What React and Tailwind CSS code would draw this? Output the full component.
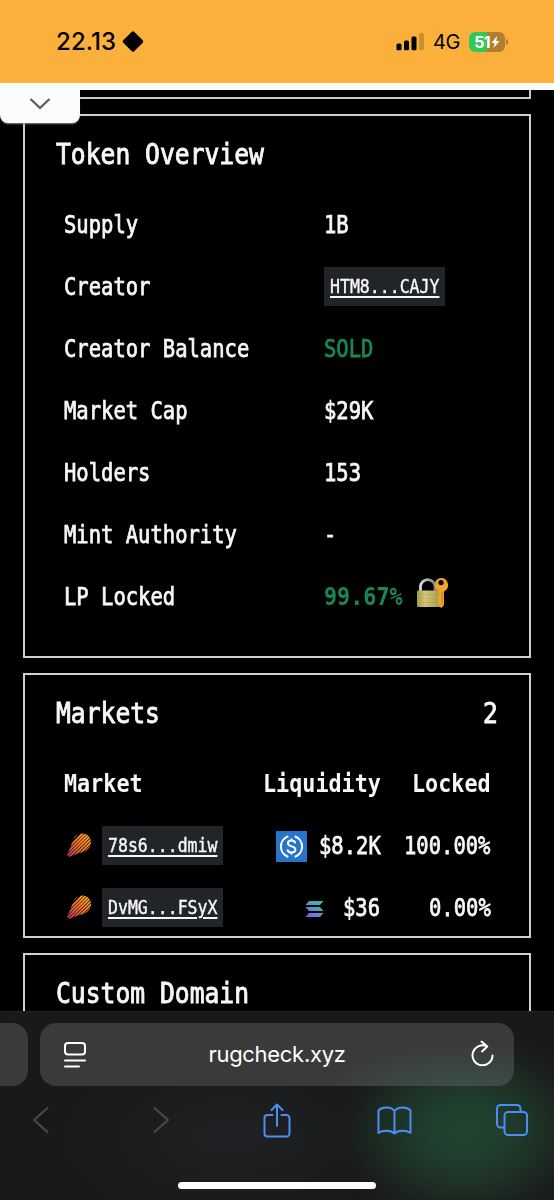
import React from "react";

const variants = {
  title: { cls: "text-[28.5px] leading-[32px] [-webkit-text-stroke:0.9px_currentColor]", advance: 17.16, pitch: 14.85 },
  body: { cls: "pt-[1px] text-[24px] leading-[28px] [-webkit-text-stroke:0.75px_currentColor]", advance: 14.45, pitch: 12.35 },
  strong: { cls: "pt-[1px] text-[24px] leading-[28px] font-bold", advance: 14.45, pitch: 13.1 },
  link: {
    cls: "text-[19.5px] leading-[24px] underline decoration-2 underline-offset-[3px] [-webkit-text-stroke:0.4px_currentColor]",
    advance: 11.74,
    pitch: 9.95,
  },
};

// Condensed monospace text: the wrapper reserves the condensed width.
function Mono({ children, v = "body", className = "" }) {
  const { cls, advance, pitch } = variants[v];
  return (
    <span className={`block shrink-0 whitespace-pre ${className}`} style={{ width: children.length * pitch }}>
      <span
        className={`block w-max origin-left font-['DejaVu_Sans_Mono',monospace] ${cls}`}
        style={{ transform: `scaleX(${pitch / advance})` }}
      >
        {children}
      </span>
    </span>
  );
}

function AddressLink({ children }) {
  return (
    <a className="flex h-[39px] w-[121px] items-center bg-[#212428] pl-[6px] pt-[2px]">
      <Mono v="link">{children}</Mono>
    </a>
  );
}

function LockIcon() {
  return (
    <svg className="ml-[13px] h-8 w-[33px] -translate-y-[3px]" viewBox="0 0 33 32">
      <defs>
        <linearGradient id="brass" x1="0" x2="1">
          <stop offset="0" stopColor="#a39a45" />
          <stop offset=".35" stopColor="#d3c978" />
          <stop offset="1" stopColor="#a99a49" />
        </linearGradient>
        <linearGradient id="steel" x1="0" x2="1">
          <stop offset="0" stopColor="#d5dae0" />
          <stop offset="1" stopColor="#79818c" />
        </linearGradient>
      </defs>
      <path d="M4.5 15V10a7.3 7.3 0 0 1 14.6 0v5" fill="none" stroke="url(#steel)" strokeWidth="2.8" />
      <rect x="1" y="13.5" width="23" height="16.5" rx="1" fill="url(#brass)" />
      <path d="M1.5 17.5h22M1.5 21.5h22M1.5 25.5h22" stroke="#8f873f" strokeWidth=".6" opacity=".4" />
      <path
        fillRule="evenodd"
        d="M25 1a7.1 7.1 0 0 1 3 13.5V28l-2.6 3-2.6-2v-2l-1.6-1 1.6-1.5v-2l-1.6-1 1.6-1.5v-5.5A7.1 7.1 0 0 1 25 1Zm0 2a2.6 2.6 0 1 0 0 5.2A2.6 2.6 0 0 0 25 3Z"
        fill="#eda52b"
      />
      <path d="M26.3 15v13" stroke="#b97812" strokeWidth=".8" />
    </svg>
  );
}

function MeteoraIcon({ id }) {
  return (
    <svg className="h-6 w-[26px]" viewBox="0 0 26 24">
      <defs>
        <linearGradient id={`${id}-g`} x1="1" y1="0" x2="0" y2="1">
          <stop offset="0" stopColor="#ffae10" />
          <stop offset=".55" stopColor="#f3702f" />
          <stop offset="1" stopColor="#b12d68" />
        </linearGradient>
        <mask id={`${id}-m`}>
          <path
            d="M-2 14L14-2M0 17L18-1M0 20.500L21-.5M0 24L24 0M1.500 26L26 1.500M5 26L28 3M8.500 26L28 6.500M12 26L30 8"
            stroke="#fff"
            strokeWidth="1.9"
          />
        </mask>
      </defs>
      <path
        d="M7.500 6C9.500 2 13 .5 16.500.5 21.500.5 25 4.200 25 9c0 4-2.500 7.500-6.500 9.500L12 20.500 3 24 1 22l3-7Z"
        fill={`url(#${id}-g)`}
        mask={`url(#${id}-m)`}
      />
    </svg>
  );
}

function UsdcIcon() {
  return (
    <svg className="mr-3 h-[31px] w-[31px] translate-y-[1px]" viewBox="0 0 31 31" fill="none" stroke="#fff">
      <rect width="31" height="31" fill="#2775ca" stroke="none" />
      <path d="M12.300 5.200a11 11 0 0 0 0 20.800M18.700 5.200a11 11 0 0 1 0 20.800" strokeWidth="2" />
      <path
        d="M19.200 12.300c-.2-1.800-1.600-2.700-3.700-2.700s-3.600 1-3.600 2.700c0 4.200 7.500 2 7.500 6.200 0 1.800-1.500 2.900-3.900 2.900s-3.900-1-4-3M15.500 7.500v2.200M15.500 21.300v2.300"
        strokeWidth="2"
      />
    </svg>
  );
}

function SolanaIcon() {
  return (
    <svg className="mr-[19px] h-[17px] w-[19px] translate-y-[1.5px]" viewBox="0 0 19 17">
      <defs>
        <linearGradient id="sol" x1="17" y1="0" x2="3" y2="17" gradientUnits="userSpaceOnUse">
          <stop offset="0" stopColor="#20c99a" />
          <stop offset=".5" stopColor="#5798c0" />
          <stop offset="1" stopColor="#8955ee" />
        </linearGradient>
      </defs>
      <path d="M4 .5h14.500l-3.500 4H.5ZM.5 6.500H15l3.500 4H4ZM4 12.500h14.500l-3.500 4H.5Z" fill="url(#sol)" />
    </svg>
  );
}

function Row({ label, children }) {
  return (
    <div className="flex h-[62px] items-center">
      <div className="w-[260px]">
        <Mono>{label}</Mono>
      </div>
      {children}
    </div>
  );
}

function MarketRow({ id, address, icon, liquidity, locked }) {
  return (
    <div className="flex h-[62px] items-center">
      <div className="flex w-[164px] items-center gap-[10px] pl-[2px]">
        <MeteoraIcon id={id} />
        <AddressLink>{address}</AddressLink>
      </div>
      <div className="flex w-[152.500px] items-center justify-end">
        {icon}
        <Mono>{liquidity}</Mono>
      </div>
      <div className="flex w-[110px] justify-end">
        <Mono>{locked}</Mono>
      </div>
    </div>
  );
}

function StatusBar() {
  return (
    <header className="flex h-[83px] shrink-0 items-center bg-[#fcb03c] pl-[56px] pr-[46px] font-['Inter',sans-serif] text-black">
      <span className="w-[65px] text-[24px] font-medium tracking-[0.1px]">22.13</span>
      <svg className="h-6 w-6 -translate-y-[0.5px]" viewBox="0 0 24 24">
        <rect x="4.300" y="4.300" width="15.400" height="15.400" rx="1.600" transform="rotate(45 12 12)" />
      </svg>
      <svg className="ml-auto h-[18px] w-[29px] -translate-y-[0.5px]" viewBox="0 0 29 18">
        <rect x="0.500" y="11" width="5" height="7" rx="1.500" />
        <rect x="8" y="8" width="5" height="10" rx="1.500" />
        <rect x="15.500" y="4" width="5" height="14" rx="1.500" />
        <rect x="23" y="0.500" width="5" height="17.500" rx="1.500" fill="#cb902f" />
      </svg>
      <span className="ml-[8px] w-[36px] text-[20px] tracking-[-0.4px]">4G</span>
      <div className="flex h-5 w-9 items-center justify-center overflow-hidden rounded-[6px] bg-[linear-gradient(90deg,#34c759_50%,#b17d30_50%)] text-[16px] font-bold tracking-[-0.8px] text-white">
        51
        <svg className="ml-[1px] h-3 w-[9px]" viewBox="0 0 9 12" fill="#fff">
          <path d="M6 0L.5 7h3L2.500 12 8.500 5h-3.200Z" />
        </svg>
      </div>
      <div className="ml-[1px] h-[6px] w-[2px] rounded-r-full bg-[#b17d30]" />
    </header>
  );
}

function BrowserBar() {
  return (
    <footer className="flex h-[189px] shrink-0 flex-col border-t border-[#252525] bg-[#191919] bg-[radial-gradient(ellipse_135px_100px_at_465px_118px,#21432f_0%,#203f2d_25%,#1d3126_55%,#1a1f1c_82%,transparent_100%),radial-gradient(ellipse_170px_90px_at_230px_125px,#202124,transparent)] pt-[11px]">
      <div className="flex h-[63px] gap-3">
        <div className="w-7 rounded-r-[16px] bg-[#3a3a3a]" />
        <div className="flex w-[474px] items-center justify-between rounded-[16px] bg-[#3a3a3a] bg-[radial-gradient(ellipse_150px_55px_at_425px_75px,#3c5448,transparent)] pl-6 pr-[19px] text-white">
          <svg className="h-[26px] w-[23px]" viewBox="0 0 23 26" fill="none" stroke="currentColor" strokeWidth="2" strokeLinecap="round">
            <rect x="1" y="1" width="20" height="11.500" rx="3" />
            <path d="M1 18.500h20M1 24.500h14" />
          </svg>
          <span className="-translate-x-[2px] font-['Inter',sans-serif] text-[22px] tracking-[-0.3px]">rugcheck.xyz</span>
          <svg className="h-[26px] w-6 -translate-y-[1.5px]" viewBox="0 0 24 26" fill="none" stroke="currentColor" strokeWidth="2" strokeLinecap="round" strokeLinejoin="round">
            <path d="M21.500 15A10 10 0 1 1 16 5.900M10.500 1l5.800 4.900-5.300 5" />
          </svg>
        </div>
      </div>
      <div className="mt-[16px] flex h-9 items-center justify-between pl-[23px] pr-[24px] text-[#4c8df5]">
        <div className="flex w-9 justify-center">
          <svg className="h-[26px] w-4 text-[#4a4a4b]" viewBox="0 0 16 26" fill="none" stroke="currentColor" strokeWidth="2" strokeLinecap="round">
            <path d="M14.500 1L1 13l13.500 12" />
          </svg>
        </div>
        <div className="flex w-9 justify-center pl-[5px]">
          <svg className="h-[26px] w-4 shrink-0 text-[#4a4a4b]" viewBox="0 0 16 26" fill="none" stroke="currentColor" strokeWidth="2" strokeLinecap="round">
            <path d="M1.500 1L15 13 1.500 25" />
          </svg>
        </div>
        <div className="flex w-9 justify-center">
          <svg className="h-[35px] w-[28px]" viewBox="0 0 28 35" fill="none" stroke="currentColor" strokeWidth="2" strokeLinecap="round" strokeLinejoin="round">
            <path d="M9.500 12H4.500A3 3 0 0 0 1.500 15v15.500a3 3 0 0 0 3 3h19a3 3 0 0 0 3-3V15a3 3 0 0 0-3-3h-5M14 23V2M8.500 7L14 1.500 19.500 7" />
          </svg>
        </div>
        <div className="flex w-9 justify-center">
          <svg className="h-[29px] w-[35px]" viewBox="0 0 35 29" fill="none" stroke="currentColor" strokeWidth="2" strokeLinejoin="round">
            <path d="M17.500 5C14 .5 5.500.5 1.500 4.500v22.500c4-3 12.500-3 16 .5 3.500-3.500 12-3.500 16-.5V4.500C29.500.5 21 .5 17.500 5v22.500" />
          </svg>
        </div>
        <div className="flex w-9 justify-center">
          <svg className="h-8 w-8" viewBox="0 0 32 32" fill="none" stroke="currentColor" strokeWidth="2">
            <rect x="8.500" y="8" width="22.500" height="23" rx="3.500" />
            <path d="M24.500 8V4.500A3.500 3.500 0 0 0 21 1H4.500A3.500 3.500 0 0 0 1 4.500V20a3.500 3.500 0 0 0 3.500 3.500h4" />
          </svg>
        </div>
      </div>
      <div className="mx-auto mt-auto mb-[11px] h-[7px] w-[198px] rounded-full bg-white" />
    </footer>
  );
}

export default function App() {
  return (
    <div className="flex h-[1200px] w-[554px] flex-col overflow-hidden bg-black text-[#f7f7f7]">
      <StatusBar />
      <div className="relative h-[7px] shrink-0 bg-[#fafcfc]">
        <div className="absolute left-0 top-0 flex h-[40px] w-20 items-center justify-center rounded-b-[8px] bg-[#fafcfc] pt-[2px] [box-shadow:0_2px_2px_-1px_#888]">
          <svg className="h-3 w-[22px]" viewBox="0 0 22 12" fill="none" stroke="#5c5d5f" strokeWidth="2.300">
            <path d="M1.500 1L11 10 20.500 1" />
          </svg>
        </div>
      </div>
      <main className="flex min-h-0 flex-1 flex-col overflow-hidden px-[23px]">
        <div className="h-[9px] w-[508px] shrink-0 border-2 border-t-0 border-[#cacaca]" />
        <section className="mt-[15px] h-[544px] w-[508px] shrink-0 border-2 border-[#d0d0d0] pl-[31px] pt-[23px]">
          <Mono v="title">Token Overview</Mono>
          <div className="pl-2 pt-[22px]">
            <Row label="Supply"><Mono>1B</Mono></Row>
            <Row label="Creator"><AddressLink>HTM8...CAJY</AddressLink></Row>
            <Row label="Creator Balance"><Mono className="text-[#198754]">SOLD</Mono></Row>
            <Row label="Market Cap"><Mono>$29K</Mono></Row>
            <Row label="Holders"><Mono>153</Mono></Row>
            <Row label="Mint Authority"><Mono>-</Mono></Row>
            <Row label="LP Locked">
              <Mono v="strong" className="text-[#198754]">99.67%</Mono>
              <LockIcon />
            </Row>
          </div>
        </section>
        <section className="mt-[15px] h-[265px] w-[508px] shrink-0 border-2 border-[#d0d0d0] pl-[31px] pr-[31px] pt-[23px]">
          <div className="flex justify-between">
            <Mono v="title">Markets</Mono>
            <Mono v="title">2</Mono>
          </div>
          <div className="pl-2 pt-[22px]">
            <div className="flex h-[62px] items-center">
              <div className="w-[164px]"><Mono v="strong">Market</Mono></div>
              <div className="flex w-[152.500px] justify-end"><Mono v="strong">Liquidity</Mono></div>
              <div className="flex w-[110px] justify-end"><Mono v="strong">Locked</Mono></div>
            </div>
            <MarketRow id="m1" address="78s6...dmiw" icon={<UsdcIcon />} liquidity="$8.2K" locked="100.00%" />
            <MarketRow id="m2" address="DvMG...FSyX" icon={<SolanaIcon />} liquidity="$36" locked="0.00%" />
          </div>
        </section>
        <section className="mt-[15px] h-[120px] w-[508px] shrink-0 border-2 border-[#d0d0d0] pl-[31px] pt-[23px]">
          <Mono v="title">Custom Domain</Mono>
        </section>
      </main>
      <BrowserBar />
    </div>
  );
}
